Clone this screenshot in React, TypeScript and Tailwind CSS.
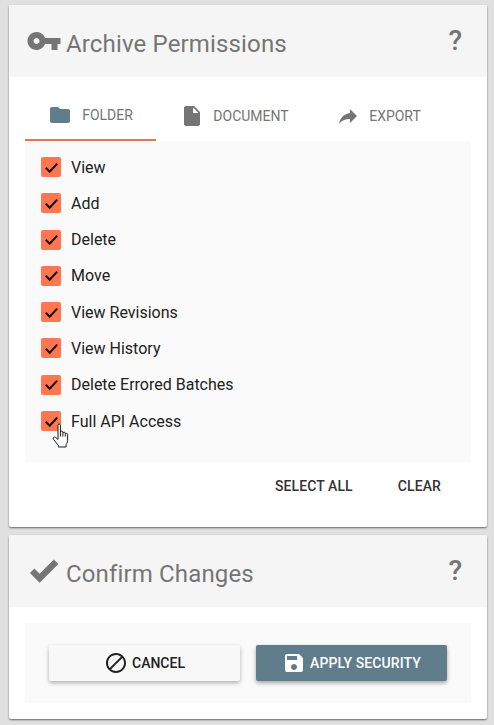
const permissions = [
  "View",
  "Add",
  "Delete",
  "Move",
  "View Revisions",
  "View History",
  "Delete Errored Batches",
  "Full API Access",
];

function Icon({ d, className }: { d: string; className: string }) {
  return (
    <svg viewBox="0 0 24 24" fill="currentColor" className={className}>
      <path d={d} />
    </svg>
  );
}

const paths = {
  key: "M12.65 10C11.83 7.67 9.61 6 7 6c-3.31 0-6 2.69-6 6s2.69 6 6 6c2.61 0 4.83-1.67 5.65-4H17v4h4v-4h2v-4H12.65zM7 14c-1.1 0-2-.9-2-2s.9-2 2-2 2 .9 2 2-.9 2-2 2z",
  folder: "M10 4H4c-1.1 0-1.99.9-1.99 2L2 18c0 1.1.9 2 2 2h16c1.1 0 2-.9 2-2V8c0-1.1-.9-2-2-2h-8l-2-2z",
  file: "M6 2c-1.1 0-1.99.9-1.99 2L4 20c0 1.1.89 2 1.99 2H18c1.1 0 2-.9 2-2V8l-6-6H6zm7 7V3.5L18.5 9H13z",
  share: "M14 9V5l7 7-7 7v-4.1c-5 0-8.5 1.6-11 5.1 1-5 4-10 11-11z",
  save: "M17 3H5c-1.11 0-2 .9-2 2v14c0 1.1.89 2 2 2h14c1.1 0 2-.9 2-2V7l-4-4zm-5 16c-1.66 0-3-1.34-3-3s1.34-3 3-3 3 1.34 3 3-1.34 3-3 3zm3-10H5V5h10v4z",
  block: "M12 2C6.48 2 2 6.48 2 12s4.48 10 10 10 10-4.48 10-10S17.52 2 12 2zM4 12c0-4.42 3.58-8 8-8 1.85 0 3.55.63 4.9 1.69L5.69 16.9C4.63 15.55 4 13.85 4 12zm8 8c-1.85 0-3.55-.63-4.9-1.69L18.31 7.1C19.37 8.45 20 10.15 20 12c0 4.42-3.58 8-8 8z",
  heavyCheck: "M1.5 13.2 L5 9.7 L9 13.7 L20 2.7 L23.5 6.2 L9 20.7 Z",
};

function CardHeader({ icon, title }: { icon: React.ReactNode; title: string }) {
  return (
    <div className="flex h-[72px] items-center bg-[#f5f5f5] pl-[17px] pr-[25px] text-[#757575]">
      <div className="flex w-[40px] shrink-0 items-center">{icon}</div>
      <h2 className="mt-[6px] text-[24px] font-normal leading-none tracking-[0.15px]">{title}</h2>
      <span className="ml-auto text-[28px] font-medium leading-none">?</span>
    </div>
  );
}

function HandCursor() {
  return (
    <svg
      viewBox="0 0 20 26"
      className="absolute left-[11px] top-[12px] h-[26px] w-[20px]"
      fill="#ffffff"
      stroke="#1a1a1a"
      strokeWidth="1"
      strokeLinejoin="round"
    >
      <path d="M6 2.2c0-1.6 2.4-1.6 2.4 0V9c.2-1.2 2.3-1.2 2.5 0v1c.2-1.1 2.2-1.1 2.4.1v.9c.3-1 2.2-.9 2.3.4v5.8c0 2.4-.8 3.3-1.5 4.4V24H6.4v-1.6C5 21 3.4 18.6 1.6 16.4c-1.2-1.6.7-3 2-2L6 16.4V2.2z" />
      <path d="M8.4 9v4.5M10.9 10v3.5M13.3 11v2.5" fill="none" />
    </svg>
  );
}

function PermissionRow({ label, hovered }: { label: string; hovered: boolean }) {
  return (
    <label className="relative flex h-[20px] items-center">
      <span className="flex h-[20px] w-[20px] items-center justify-center rounded-[2px] bg-[#ff7650]">
        <svg viewBox="0 0 24 24" className="h-[17px] w-[17px]" fill="none" stroke="#1b0f0b" strokeWidth="3">
          <path d="M4 12.5 L9.5 18 L20 6.5" />
        </svg>
      </span>
      <span className="ml-[10px] mt-[1px] text-[16px] font-normal leading-none text-[#212121]">{label}</span>
      {hovered && <HandCursor />}
    </label>
  );
}

export default function App() {
  return (
    <div
      className="flex h-[725px] w-[494px] flex-col gap-[8px] overflow-hidden bg-[#e0e0e0] pl-[9px] pr-[7px] pt-[5px]"
      style={{ fontFamily: "Roboto, sans-serif" }}
    >
      <section className="h-[522px] shrink-0 overflow-hidden rounded-[2px] bg-white shadow-[0_1px_2px_rgba(0,0,0,0.55)]">
        <CardHeader icon={<Icon d={paths.key} className="h-[36px] w-[36px]" />} title="Archive Permissions" />
        <div className="px-[16px]">
          <div className="grid h-[64px] grid-cols-[131px_131px_131px] gap-x-[13px] pt-[14px] text-[14px] text-[#757575]">
            <div className="-mt-[14px] flex items-center justify-center gap-[10px] border-b-2 border-[#e07a52] pt-[14px]">
              <Icon d={paths.folder} className="h-[24px] w-[24px] text-[#607d8b]" />
              <span>FOLDER</span>
            </div>
            <div className="flex items-center justify-center gap-[9px]">
              <Icon d={paths.file} className="h-[24px] w-[24px]" />
              <span>DOCUMENT</span>
            </div>
            <div className="flex items-center justify-center gap-[9px]">
              <Icon d={paths.share} className="h-[24px] w-[24px]" />
              <span>EXPORT</span>
            </div>
          </div>
          <div className="flex h-[321px] flex-col gap-[16.3px] bg-[#fafafa] pl-[16px] pt-[16px]">
            {permissions.map((p) => (
              <PermissionRow key={p} label={p} hovered={p === "Full API Access"} />
            ))}
          </div>
          <div className="flex h-[48px] items-center justify-end gap-[45px] pr-[30px] pt-[1px] text-[14px] font-medium tracking-[0.1px] text-[#333333]">
            <span>SELECT ALL</span>
            <span>CLEAR</span>
          </div>
        </div>
      </section>

      <section className="h-[184px] shrink-0 overflow-hidden rounded-[2px] bg-white shadow-[0_1px_2px_rgba(0,0,0,0.55)]">
        <CardHeader icon={<Icon d={paths.heavyCheck} className="ml-[2px] h-[31px] w-[31px]" />} title="Confirm Changes" />
        <div className="p-[16px]">
          <div className="flex h-[80px] items-center justify-center gap-[16px] bg-[#fafafa] text-[14px] font-medium">
            <button className="flex h-[36px] w-[191px] items-center justify-center gap-[4px] rounded-[2px] bg-[#f8f8f8] text-[#212121] shadow-[0_2px_4px_rgba(0,0,0,0.3)]">
              <Icon d={paths.block} className="h-[24px] w-[24px]" />
              <span>CANCEL</span>
            </button>
            <button className="flex h-[36px] w-[191px] items-center justify-center gap-[4px] rounded-[2px] bg-[#607d8b] text-white shadow-[0_2px_4px_rgba(0,0,0,0.35)]">
              <Icon d={paths.save} className="h-[24px] w-[24px]" />
              <span className="tracking-[0.1px]">APPLY SECURITY</span>
            </button>
          </div>
        </div>
      </section>
    </div>
  );
}
